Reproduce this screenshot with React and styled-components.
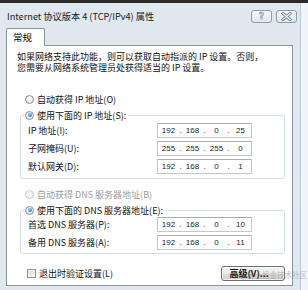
import React from "react";
import styled, { createGlobalStyle } from "styled-components";

const GlobalStyle = createGlobalStyle`
  html, body { margin: 0; padding: 0; }
  body {
    background: #f1f4f8;
    font-family: "Noto Sans CJK SC", "Noto Sans", sans-serif;
    color: #111;
  }
`;

const Root = styled.div`
  position: relative;
  width: 308px;
  height: 290px;
  overflow: hidden;
  display: flex;
  flex-direction: column;
  background: #f1f4f8;
`;

const TopStrip = styled.div`
  height: 3px;
  flex: none;
  background: #2a2a2a;
`;

const Main = styled.div`
  flex: 1;
  display: flex;
  min-height: 0;
`;

const Window = styled.div`
  box-sizing: border-box;
  width: 301px;
  display: flex;
  flex-direction: column;
  background: #dfe7ef;
  border-right: 1px solid #bccada;
`;

const TitleBar = styled.div`
  height: 25px;
  flex: none;
  display: flex;
  align-items: center;
  padding: 0 3px 0 7px;
`;

const Title = styled.div`
  flex: 1;
  font-size: 9.2px;
  color: #1d1d1d;
  white-space: nowrap;
  margin-top: 1px;
`;

const CaptionButtons = styled.div`
  display: flex;
  gap: 4px;
  margin-top: 2px;
`;

const CaptionButton = styled.div`
  box-sizing: border-box;
  width: 21px;
  height: 13px;
  border: 1px solid #8c9bae;
  border-radius: 3px;
  background: linear-gradient(#f7f9fc, #dfe6ee);
  display: flex;
  align-items: center;
  justify-content: center;
  font-family: "DejaVu Sans", sans-serif;
  font-size: 9px;
  font-weight: 700;
  line-height: 1;
  color: #f4f6f9;
  -webkit-text-stroke: 0.6px #7c8898;
`;

const Body = styled.div`
  flex: 1;
  display: flex;
  flex-direction: column;
  padding: 0 7px 4px 6px;
  min-height: 0;
`;

const Tabs = styled.div`
  display: flex;
  height: 17px;
  flex: none;
`;

const Tab = styled.div`
  box-sizing: border-box;
  position: relative;
  z-index: 1;
  width: 39px;
  height: 18px;
  border: 1px solid #8e939b;
  border-bottom: none;
  border-radius: 2px 2px 0 0;
  background: #fff;
  display: flex;
  align-items: center;
  padding: 0 0 1px 6px;
  font-size: 9.5px;
  color: #000;
`;

const Panel = styled.div`
  flex: 1;
  background: #fff;
  border: 1px solid #8e939b;
  display: flex;
  flex-direction: column;
  padding: 5px 0 3px 0;
  min-height: 0;
`;

const Description = styled.p`
  margin: 0 0 0 10px;
  font-size: 9px;
  line-height: 11px;
  color: #111;
  white-space: nowrap;
`;

const RadioRow = styled.div`
  display: flex;
  align-items: center;
  gap: 3px;
  height: 12px;
  margin: ${(p) => p.$top}px 0 0 18px;
  font-size: 9px;
  color: ${(p) => (p.$disabled ? "#9b9b9b" : "#111")};
  white-space: nowrap;
`;

const RadioDot = styled.span`
  box-sizing: border-box;
  position: relative;
  width: 9px;
  height: 9px;
  flex: none;
  border-radius: 50%;
  border: 1px solid ${(p) => (p.$disabled ? "#cacaca" : "#8b8f94")};
  background: ${(p) =>
    p.$disabled
      ? "#f4f4f4"
      : "radial-gradient(circle at 50% 35%, #ffffff, #dcdcdc)"};
  &::after {
    content: "";
    display: ${(p) => (p.$checked ? "block" : "none")};
    position: absolute;
    left: 1.5px;
    top: 1.5px;
    width: 4px;
    height: 4px;
    border-radius: 50%;
    background: radial-gradient(circle at 40% 35%, #7fd0f3, #1e63ad);
  }
`;

const Group = styled.fieldset`
  margin: 4px 7px 0 13px;
  padding: 0 0 ${(p) => p.$bottom}px 7px;
  border: 1px solid #d3dde4;
  border-radius: 3px;
  min-width: 0;
`;

const Legend = styled.legend`
  margin-left: -4px;
  padding: 0 2px 0 1px;
  height: 12px;
  display: flex;
  align-items: center;
  gap: 3px;
  font-size: 9px;
  color: #111;
  white-space: nowrap;
`;

const FieldGrid = styled.div`
  display: grid;
  grid-template-columns: 129px 95px;
  row-gap: 3px;
  align-items: center;
  margin-top: ${(p) => p.$top}px;
`;

const FieldLabel = styled.span`
  font-size: 9px;
  color: #111;
  white-space: nowrap;
`;

const IpBox = styled.div`
  box-sizing: border-box;
  width: 95px;
  height: 15px;
  border: 1px solid #c3c7ce;
  border-top-color: #abadb3;
  display: grid;
  grid-template-columns: 21px 3px 21px 3px 21px 3px 21px;
  align-items: center;
  font-family: "Liberation Sans", Arial, sans-serif;
  font-size: 8px;
  color: #1a1a1a;
  background: #fff;
`;

const Octet = styled.span`
  text-align: center;
`;

const Dot = styled.span`
  text-align: center;
`;

const Footer = styled.div`
  display: flex;
  align-items: center;
  justify-content: space-between;
  margin: 12px 7px 0 20px;
  height: 15px;
`;

const CheckRow = styled.label`
  display: flex;
  align-items: center;
  gap: 3px;
  font-size: 9px;
  color: #111;
`;

const CheckBox = styled.span`
  box-sizing: border-box;
  width: 9px;
  height: 9px;
  border: 1px solid #8f9296;
  background: linear-gradient(135deg, #d6d6d6, #f7f7f7);
  box-shadow: inset 0 0 0 1px #f2f2f2;
`;

const Button = styled.div`
  box-sizing: border-box;
  width: 64px;
  height: 15px;
  border: 1px solid #707070;
  border-radius: 3px;
  background: linear-gradient(#f3f3f3 0%, #ebebeb 50%, #dddddd 51%, #cfcfcf 100%);
  box-shadow: inset 0 0 0 1px rgba(255, 255, 255, 0.7);
  display: flex;
  align-items: center;
  justify-content: center;
  padding-right: 8px;
  font-size: 9px;
  font-weight: 700;
  color: #111;
  white-space: nowrap;
`;

const Watermark = styled.div`
  position: absolute;
  left: 240px;
  top: 271px;
  font-size: 7.5px;
  line-height: 8px;
  color: rgba(130, 130, 130, 0.55);
  white-space: nowrap;
  pointer-events: none;
`;

function Radio({ checked, disabled, children }) {
  return (
    <>
      <RadioDot $checked={checked} $disabled={disabled} />
      <span>{children}</span>
    </>
  );
}

function IpField({ value }) {
  const parts = value.split(".");
  return (
    <IpBox>
      {parts.map((p, i) => (
        <React.Fragment key={i}>
          {i > 0 && <Dot>.</Dot>}
          <Octet>{p}</Octet>
        </React.Fragment>
      ))}
    </IpBox>
  );
}

const ipRows = [
  ["IP 地址(I):", "192.168.0.25"],
  ["子网掩码(U):", "255.255.255.0"],
  ["默认网关(D):", "192.168.0.1"],
];

const dnsRows = [
  ["首选 DNS 服务器(P):", "192.168.0.10"],
  ["备用 DNS 服务器(A):", "192.168.0.11"],
];

export default function App() {
  return (
    <>
      <GlobalStyle />
      <Root>
        <TopStrip />
        <Main>
          <Window>
            <TitleBar>
              <Title>Internet 协议版本 4 (TCP/IPv4) 属性</Title>
              <CaptionButtons>
                <CaptionButton>?</CaptionButton>
                <CaptionButton>
                  <svg width="11" height="9" viewBox="0 0 11 9">
                    <path d="M2 1.5 L9 7.5 M9 1.5 L2 7.5" stroke="#7d8999" strokeWidth="3" strokeLinecap="square" />
                    <path d="M2 1.5 L9 7.5 M9 1.5 L2 7.5" stroke="#f5f7fa" strokeWidth="1.2" strokeLinecap="square" />
                  </svg>
                </CaptionButton>
              </CaptionButtons>
            </TitleBar>
            <Body>
              <Tabs>
                <Tab>常规</Tab>
              </Tabs>
              <Panel>
                <Description>
                  如果网络支持此功能，则可以获取自动指派的 IP 设置。否则，
                  <br />
                  您需要从网络系统管理员处获得适当的 IP 设置。
                </Description>

                <RadioRow $top={20}>
                  <Radio>自动获得 IP 地址(O)</Radio>
                </RadioRow>
                <Group $bottom={4}>
                  <Legend>
                    <Radio checked>使用下面的 IP 地址(S):</Radio>
                  </Legend>
                  <FieldGrid $top={2}>
                    {ipRows.map(([label, value]) => (
                      <React.Fragment key={label}>
                        <FieldLabel>{label}</FieldLabel>
                        <IpField value={value} />
                      </React.Fragment>
                    ))}
                  </FieldGrid>
                </Group>

                <RadioRow $top={9} $disabled>
                  <Radio disabled>自动获得 DNS 服务器地址(B)</Radio>
                </RadioRow>
                <Group $bottom={3}>
                  <Legend>
                    <Radio checked>使用下面的 DNS 服务器地址(E):</Radio>
                  </Legend>
                  <FieldGrid $top={1}>
                    {dnsRows.map(([label, value]) => (
                      <React.Fragment key={label}>
                        <FieldLabel>{label}</FieldLabel>
                        <IpField value={value} />
                      </React.Fragment>
                    ))}
                  </FieldGrid>
                </Group>

                <Footer>
                  <CheckRow>
                    <CheckBox />
                    <span>退出时验证设置(L)</span>
                  </CheckRow>
                  <Button>高级(V)...</Button>
                </Footer>
              </Panel>
            </Body>
          </Window>
        </Main>
        <Watermark>@稀土掘金技术社区</Watermark>
      </Root>
    </>
  );
}
